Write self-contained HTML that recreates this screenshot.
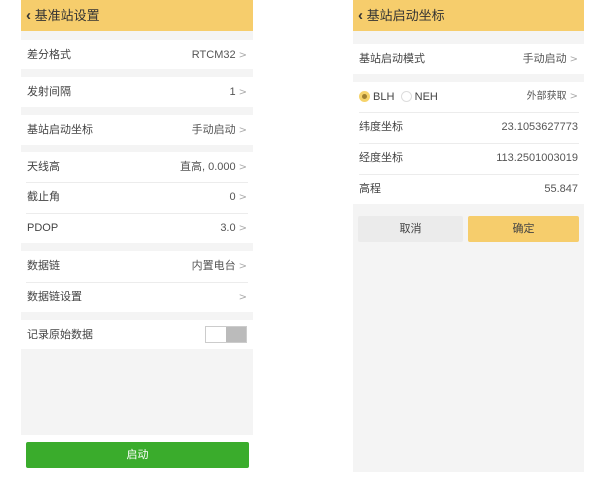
<!DOCTYPE html>
<html><head><meta charset="utf-8"><style>
*{margin:0;padding:0;box-sizing:border-box}
body{width:600px;height:477px;background:#fff;position:relative;overflow:hidden;font-family:"Liberation Sans","Noto Sans CJK SC",sans-serif;color:#444}
.a{position:absolute}
.hdr{background:#f6cd6c;height:31px;font-size:13px;color:#333;line-height:31px;padding-left:5px}
.row{position:absolute;background:#fff;font-size:11px;line-height:30px;padding:0 6px}
.row .r{position:absolute;right:6px;top:0;color:#555}
.chev{color:#aaa;margin-left:3px;font-family:"DejaVu Sans",sans-serif;font-size:10px}
.sep{position:absolute;height:1px;background:#ececec}
</style></head><body>
<div class="a" style="left:21px;top:0;width:232px;height:435px;background:#f4f4f4"></div>
<div class="a hdr" style="left:21px;top:0;width:232px"><span style="font-weight:bold;font-size:15px">&#x2039;</span> 基准站设置</div>
<div class="row" style="left:21px;top:40px;width:232px;height:29px">差分格式<span class="r">RTCM32<span class="chev">&gt;</span></span></div>
<div class="row" style="left:21px;top:77px;width:232px;height:30px">发射间隔<span class="r">1<span class="chev">&gt;</span></span></div>
<div class="row" style="left:21px;top:115px;width:232px;height:30px">基站启动坐标<span class="r">手动启动<span class="chev">&gt;</span></span></div>
<div class="row" style="left:21px;top:152px;width:232px;height:30px">天线高<span class="r">直高, 0.000<span class="chev">&gt;</span></span></div>
<div class="row" style="left:21px;top:182px;width:232px;height:31px">截止角<span class="r">0<span class="chev">&gt;</span></span></div>
<div class="row" style="left:21px;top:213px;width:232px;height:30px">PDOP<span class="r">3.0<span class="chev">&gt;</span></span></div>
<div class="sep" style="left:26px;top:182px;width:222px"></div>
<div class="sep" style="left:26px;top:213px;width:222px"></div>
<div class="row" style="left:21px;top:251px;width:232px;height:31px">数据链<span class="r">内置电台<span class="chev">&gt;</span></span></div>
<div class="row" style="left:21px;top:282px;width:232px;height:30px">数据链设置<span class="r"><span class="chev">&gt;</span></span></div>
<div class="sep" style="left:26px;top:282px;width:222px"></div>
<div class="row" style="left:21px;top:320px;width:232px;height:29px">记录原始数据</div>
<div class="a" style="left:205px;top:326px;width:42px;height:17px;border:1px solid #ccc;background:#fff"><div style="position:absolute;right:0;top:0;width:20px;height:15px;background:#bbb"></div></div>
<div class="a" style="left:26px;top:442px;width:223px;height:26px;background:#3aac2c;border-radius:2px;color:#fff;font-size:11px;text-align:center;line-height:26px">启动</div>

<div class="a" style="left:353px;top:0;width:231px;height:472px;background:#f4f4f4"></div>
<div class="a hdr" style="left:353px;top:0;width:231px"><span style="font-weight:bold;font-size:15px">&#x2039;</span> 基站启动坐标</div>
<div class="row" style="left:353px;top:44px;width:231px;height:30px">基站启动模式<span class="r">手动启动<span class="chev">&gt;</span></span></div>
<div class="row" style="left:353px;top:82px;width:231px;height:30px">
<span style="display:inline-block;width:11px;height:11px;border-radius:50%;background:#f6d36a;vertical-align:-2px;position:relative"><span style="position:absolute;left:3px;top:3px;width:5px;height:5px;border-radius:50%;background:#a08030"></span></span> BLH &nbsp;<span style="display:inline-block;width:11px;height:11px;border-radius:50%;border:1px solid #ddd;vertical-align:-2px"></span> NEH
<span class="r" style="font-size:10px">外部获取<span class="chev">&gt;</span></span></div>
<div class="row" style="left:353px;top:112px;width:231px;height:31px">纬度坐标<span class="r">23.1053627773</span></div>
<div class="row" style="left:353px;top:143px;width:231px;height:31px">经度坐标<span class="r">113.2501003019</span></div>
<div class="row" style="left:353px;top:174px;width:231px;height:30px">高程<span class="r">55.847</span></div>
<div class="sep" style="left:359px;top:112px;width:220px"></div>
<div class="sep" style="left:359px;top:143px;width:220px"></div>
<div class="sep" style="left:359px;top:174px;width:220px"></div>
<div class="a" style="left:358px;top:216px;width:105px;height:26px;background:#ebebeb;border-radius:2px;font-size:11px;text-align:center;line-height:26px">取消</div>
<div class="a" style="left:468px;top:216px;width:111px;height:26px;background:#f6cd6c;border-radius:2px;font-size:11px;text-align:center;line-height:26px">确定</div>
</body></html>
